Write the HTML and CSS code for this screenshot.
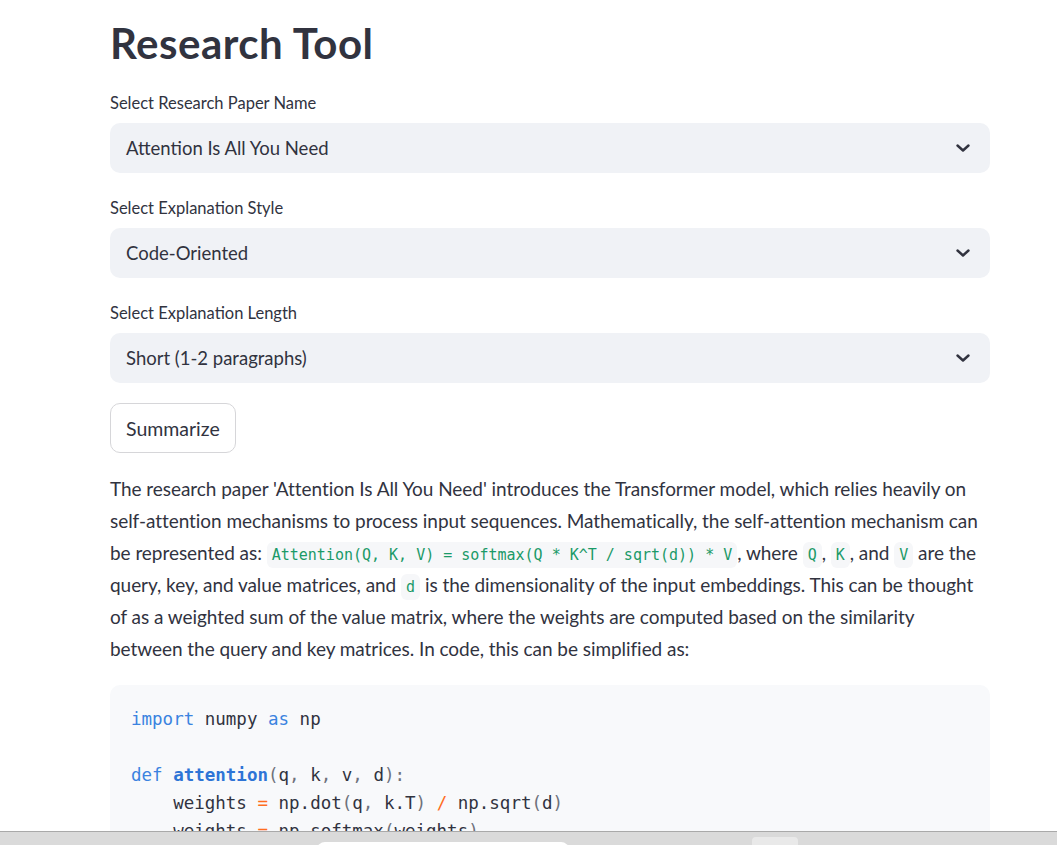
FILE: index.html
```html
<!DOCTYPE html>
<html lang="en">
<head>
<meta charset="utf-8">
<title>Research Tool</title>
<link rel="stylesheet" href="styles.css">
</head>
<body>
<main class="main">
  <h1 class="title">Research Tool</h1>

  <div class="field">
    <label class="field-label">Select Research Paper Name</label>
    <div class="select">
      <span class="select-value">Attention Is All You Need</span>
      <svg class="chevron" viewBox="0 0 14 8" width="14" height="8"><path d="M1.5 1.5 L7 6.5 L12.5 1.5" fill="none" stroke="#31333f" stroke-width="2.4" stroke-linecap="round" stroke-linejoin="round"/></svg>
    </div>
  </div>

  <div class="field">
    <label class="field-label">Select Explanation Style</label>
    <div class="select">
      <span class="select-value">Code-Oriented</span>
      <svg class="chevron" viewBox="0 0 14 8" width="14" height="8"><path d="M1.5 1.5 L7 6.5 L12.5 1.5" fill="none" stroke="#31333f" stroke-width="2.4" stroke-linecap="round" stroke-linejoin="round"/></svg>
    </div>
  </div>

  <div class="field">
    <label class="field-label">Select Explanation Length</label>
    <div class="select">
      <span class="select-value">Short (1-2 paragraphs)</span>
      <svg class="chevron" viewBox="0 0 14 8" width="14" height="8"><path d="M1.5 1.5 L7 6.5 L12.5 1.5" fill="none" stroke="#31333f" stroke-width="2.4" stroke-linecap="round" stroke-linejoin="round"/></svg>
    </div>
  </div>

  <div class="button-row">
    <button class="btn">Summarize</button>
  </div>

  <p class="answer">The research paper 'Attention Is All You Need' introduces the Transformer model, which relies heavily on self-attention mechanisms to process input sequences. Mathematically, the self-attention mechanism can be represented as: <code class="inline">Attention(Q, K, V) = softmax(Q * K^T / sqrt(d)) * V</code>, where <code class="inline">Q</code>, <code class="inline">K</code>, and <code class="inline">V</code> are the query, key, and value matrices, and <code class="inline">d</code> is the dimensionality of the input embeddings. This can be thought of as a weighted sum of the value matrix, where the weights are computed based on the similarity between the query and key matrices. In code, this can be simplified as:</p>

  <pre class="code"><code><span class="kw">import</span> numpy <span class="kw">as</span> np

<span class="kw">def</span> <span class="fn">attention</span><span class="pu">(</span>q<span class="pu">,</span> k<span class="pu">,</span> v<span class="pu">,</span> d<span class="pu">):</span>
    weights <span class="op">=</span> np.dot<span class="pu">(</span>q<span class="pu">,</span> k.T<span class="pu">)</span> <span class="op">/</span> np.sqrt<span class="pu">(</span>d<span class="pu">)</span>
    weights <span class="op">=</span> np.softmax<span class="pu">(</span>weights<span class="pu">)</span>
    <span class="kw">return</span> np.dot<span class="pu">(</span>weights<span class="pu">,</span> v<span class="pu">)</span></code></pre>
</main>

<div class="taskbar">
  <div class="taskbar-search"></div>
  <div class="taskbar-btn"></div>
</div>
</body>
</html>
```

FILE: styles.css
```css
html, body {
  margin: 0;
  padding: 0;
  background: #ffffff;
  overflow: hidden;
}

body {
  font-family: "Lato", "Noto Sans", sans-serif;
  color: #31333f;
}

.main {
  width: 880px;
  margin-left: 110px;
  padding-top: 15px;
  display: flex;
  flex-direction: column;
}

.title {
  margin: 0;
  font-size: 42px;
  line-height: 56px;
  font-weight: 700;
  letter-spacing: 0.5px;
  height: 56px;
  margin-bottom: 20px;
}

.field {
  display: flex;
  flex-direction: column;
  margin-bottom: 23px;
}

.field-label {
  font-size: 16.5px;
  line-height: 25px;
  height: 25px;
  margin-bottom: 7px;
}

.select {
  height: 50px;
  background: #f0f2f6;
  border-radius: 10px;
  display: flex;
  align-items: center;
  justify-content: space-between;
  padding: 0 20px 0 16px;
  box-sizing: border-box;
}

.select-value {
  font-size: 18.5px;
}

.chevron {
  display: block;
}

.button-row {
  margin-top: -3px;
  display: flex;
}

.btn {
  height: 50px;
  padding: 0 15px;
  border: 1px solid #d6d6d9;
  border-radius: 10px;
  background: #ffffff;
  color: #31333f;
  font-family: inherit;
  font-size: 19.5px;
}

.answer {
  margin: 20px 0 20px;
  font-size: 19px;
  line-height: 32px;
  letter-spacing: -0.05px;
}

.inline {
  font-family: "DejaVu Sans Mono", "Liberation Mono", monospace;
  font-size: 15px;
  line-height: 1;
  letter-spacing: 0;
  color: #1b9a68;
  background: #f6f7f9;
  border-radius: 6px;
  padding: 4px 5px;
}

.code {
  margin: 0;
  background: #f8f9fb;
  border-radius: 10px;
  padding: 20px 21px;
  font-family: "DejaVu Sans Mono", "Liberation Mono", monospace;
  font-size: 17.5px;
  line-height: 28px;
  color: #31333f;
}

.kw { color: #3b83e0; }
.fn { color: #2e74d6; font-weight: 700; }
.op { color: #ff6d1f; }
.pu { color: #6e717c; }

.taskbar {
  position: fixed;
  left: 0;
  right: 0;
  bottom: 0;
  height: 13px;
  background: #dadada;
  border-top: 1px solid #a9a9a9;
}

.taskbar-search {
  position: absolute;
  left: 317px;
  top: 10px;
  width: 252px;
  height: 20px;
  background: #ffffff;
  border-radius: 8px;
}

.taskbar-btn {
  position: absolute;
  left: 752px;
  top: 5px;
  width: 46px;
  height: 20px;
  background: #e9e9e9;
  border-radius: 4px;
}
```
